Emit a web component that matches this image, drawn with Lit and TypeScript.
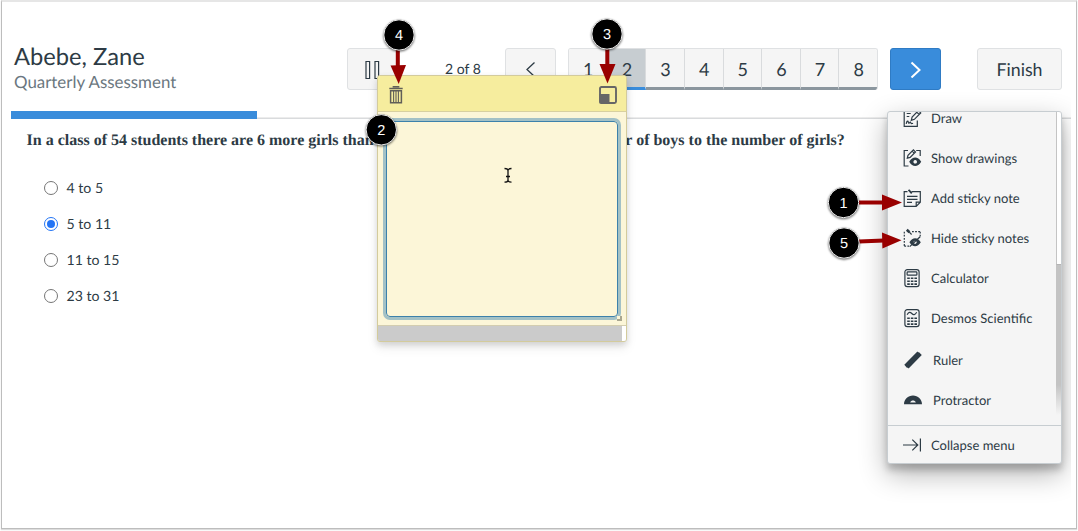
import { LitElement, html, css, svg, nothing } from "lit";
import { customElement, property, state } from "lit/decorators.js";
import { classMap } from "lit/directives/class-map.js";

interface Tool {
  icon: string;
  label: string;
  shape?: boolean;
}

interface Callout {
  label: string;
  x: number;
  y: number;
  line?: string;
  head?: string;
}

const TOOLS: Tool[] = [
  { icon: "draw", label: "Draw" },
  { icon: "show-drawings", label: "Show drawings" },
  { icon: "note", label: "Add sticky note" },
  { icon: "hide-notes", label: "Hide sticky notes" },
  { icon: "calculator", label: "Calculator" },
  { icon: "desmos", label: "Desmos Scientific" },
  { icon: "ruler", label: "Ruler", shape: true },
  { icon: "protractor", label: "Protractor", shape: true },
];

const CALLOUTS: Callout[] = [
  { label: "1", x: 843.5, y: 202.5, line: "M858 202.5H884", head: "M882 194.5V210.5L902 202.5Z" },
  { label: "2", x: 381.3, y: 129.8 },
  { label: "3", x: 607, y: 34, line: "M607.3 48V66", head: "M599.5 64H615.5L607.5 83.5Z" },
  { label: "4", x: 399, y: 35, line: "M397.8 49V67", head: "M390.5 65.5L406 65L398.7 84Z" },
  { label: "5", x: 844, y: 243, line: "M859 241.4L884 240.6", head: "M882 232.5L882.4 248.5L901.5 240.2Z" },
];

const ANSWERS = ["4 to 5", "5 to 11", "11 to 15", "23 to 31"];

const keypad = svg`
  <path
    d="M4.2 9.3h2.6M7.8 9.3h2.6M11.4 9.3h2.6M4.2 12.2h2.6M7.8 12.2h2.6M11.4 12.2h2.6M4.2 15.1h2.6M7.8 15.1h2.6M11.4 15.1h2.6"
    stroke-width="1.6"
  ></path>
`;

const ICONS: Record<string, unknown> = {
  draw: svg`
    <path d="M8 1.5H1.2V17.3H14.3V11.5M3.7 4.5h4M3.7 7.5h2.6"></path>
    <path d="M3.2 14.8c.6-2.6 1.5-3.5 2-2.2s.3 2.2 1.2 1.2 1-.8 1.5.2 1 .4 2.2.4"></path>
    <path d="M8.3 11.3l.8-3.3L15.4 1.6l2.3 2.3-6.3 6.4zM13.8 3.2l2.3 2.3"></path>
  `,
  "show-drawings": svg`
    <path d="M5 1.5H1.2V17H5.5M13.2 1.5h4V7"></path>
    <path d="M4.3 9.2l.7-2.9L10.4.9l2.1 2.1-5.4 5.4zM9.2 2.2l2.1 2.1"></path>
    <path
      class="solid"
      fill-rule="evenodd"
      d="M6.2 12.8C8 9.7 10 8.5 12.2 8.5s4.2 1.2 6 4.3c-1.8 3-3.8 4.2-6 4.2s-4.2-1.2-6-4.2zM12.2 11a1.8 1.8 0 1 0 .01 0z"
    ></path>
  `,
  note: svg`
    <path d="M4.5 2.7H1.2V17.3H13.2L17.3 13.2V2.7H8.5M13.2 17.3V13.2H17.3"></path>
    <path d="M4 7.3h10.5M4 10.3h10.5M4 13.3h5"></path>
    <path d="M5.5.8l1.6 1.6M7 2.4l1.8 2" stroke-width="1.9"></path>
  `,
  "hide-notes": svg`
    <path d="M1.3 2.7v15M1.3 17.2H6M9 2.7h9M17.2 2.7v5" stroke-dasharray="1.8 1.3"></path>
    <path d="M3.8.8l2.7 2.5" stroke-width="2.6"></path>
    <path d="M6.3 3.1l2.3 2.4"></path>
    <path
      class="solid"
      fill-rule="evenodd"
      d="M6.4 13.300c1.700-2.900 3.600-4 5.700-4s4 1.100 5.700 4c-1.700 2.900-3.600 4-5.700 4s-4-1.100-5.700-4zM12.100 11.700a1.600 1.600 0 1 0 .01 0z"
    ></path>
    <path d="M6.7 17.6L17.1 7.8" stroke-width="1.3"></path>
  `,
  calculator: svg`
    <rect x="1.9" y=".7" width="14.2" height="16.9" rx="2.4"></rect>
    <rect x="4.1" y="2.9" width="9.8" height="3.3" rx=".8"></rect>
    ${keypad}
  `,
  desmos: svg`
    <rect x="1.9" y=".7" width="14.2" height="16.9" rx="2.4"></rect>
    <path d="M4.1 5.7C5.8 2.7 7.2 2.9 8.8 4.5s3.2 1.6 4.9-1.3"></path>
    ${keypad}
  `,
  ruler: svg`<path class="solid" d="M.3 13.7L13.4.5l.9.9.5-.4 3 3L4.6 17.5l-1-1-.5.4z"></path>`,
  protractor: svg`
    <path
      class="solid"
      fill-rule="evenodd"
      d="M0 13.2C.2 8 4 4.5 9 4.5s8.8 3.5 9 8.7zM6.2 11.6h5.6C11.3 10 10.2 9.5 9 9.5s-2.3.5-2.8 2.1z"
    ></path>
  `,
  collapse: svg`<path d="M0 9h15M9.3 3.6L14.8 9l-5.5 5.4M17.4 2.5v13"></path>`,
};

@customElement("tool-icon")
export class ToolIcon extends LitElement {
  @property() name = "";

  static styles = css`
    :host {
      display: block;
      width: 18px;
      height: 18px;
      flex: none;
    }

    svg {
      display: block;
      overflow: visible;
      fill: none;
      stroke: #2d3b45;
      stroke-width: 1.2;
    }

    .solid {
      fill: #2d3b45;
      stroke: none;
    }
  `;

  protected render() {
    return html`<svg width="18" height="18" viewBox="0 0 18 18">${ICONS[this.name] ?? nothing}</svg>`;
  }
}

@customElement("tool-menu")
export class ToolMenu extends LitElement {
  static styles = css`
    :host {
      display: flex;
      flex-direction: column;
      box-sizing: border-box;
      background: #f5f5f5;
      border: 1px solid #c7cdd1;
      border-radius: 3px;
      overflow: hidden;
      color: #2d3b45;
      font-size: 13px;
    }

    .scroller {
      flex: 1;
      min-height: 0;
      display: flex;
      overflow: hidden;
    }

    .list {
      flex: 1;
      margin-top: -14px;
    }

    .row {
      display: flex;
      align-items: center;
      box-sizing: border-box;
      gap: 10px;
      height: 40px;
      padding: 0 0 1px 15px;
      white-space: nowrap;
    }

    .row.shape {
      padding: 4px 0 0 16px;
      gap: 11px;
    }

    .track {
      width: 5px;
      height: 303px;
      background: linear-gradient(#c3c3c3 90%, #f5f5f5);
    }

    .thumb {
      height: 153px;
      box-sizing: border-box;
      background: #fff;
      border-left: 1px solid #c4c4c4;
      border-bottom: 1px solid #b5b5b5;
    }

    .footer {
      height: 38px;
      padding-bottom: 0;
      border-top: 1px solid #c7cdd1;
    }
  `;

  protected render() {
    return html`
      <div class="scroller">
        <div class="list">
          ${TOOLS.map(
            (tool) => html`
              <div class=${classMap({ row: true, shape: !!tool.shape })}>
                <tool-icon name=${tool.icon}></tool-icon>
                <span>${tool.label}</span>
              </div>
            `
          )}
        </div>
        <div class="track"><div class="thumb"></div></div>
      </div>
      <div class="row footer">
        <tool-icon name="collapse"></tool-icon>
        <span>Collapse menu</span>
      </div>
    `;
  }
}

@customElement("sticky-note")
export class StickyNote extends LitElement {
  static styles = css`
    :host {
      display: flex;
      flex-direction: column;
      box-sizing: border-box;
      background: #fcf6d8;
      border: 1px solid #d3cb9c;
      border-radius: 3px;
      overflow: hidden;
    }

    .bar {
      display: flex;
      justify-content: space-between;
      align-items: center;
      box-sizing: border-box;
      height: 36px;
      padding: 2px 9px 0 11px;
      background: #f6ed9e;
      border-bottom: 1px solid #d8d0a0;
    }

    .bar svg {
      display: block;
    }

    .body {
      flex: 1;
      display: flex;
      padding: 9px 8px 8px 8px;
    }

    .text {
      flex: 1;
      display: flex;
      justify-content: flex-end;
      align-items: flex-end;
      border: 1px solid #3c81ab;
      border-radius: 4px;
      box-shadow: 0 0 0 3px #a3c1c6;
    }

    .grip {
      width: 3px;
      height: 3px;
      margin: 0 -5px -5px 0;
      border: 1px solid #a9a68f;
      border-width: 0 2px 2px 0;
      background: #fcf6d8;
    }

    .foot {
      display: flex;
      justify-content: flex-end;
      height: 15px;
      background: #cbcbcb;
      border-top: 1px solid #d3cdb0;
    }

    .corner {
      width: 4px;
      background: #fff;
    }
  `;

  protected render() {
    return html`
      <div class="bar">
        <svg width="14" height="18" viewBox="0 0 14 18" fill="none" stroke="#615f58">
          <path d="M4.5 1.5V.7h5v.8M.3 2.5h13.4" stroke-width="1.7"></path>
          <path d="M1.6 4.7h10.8v12H1.6z" stroke-width="1.5"></path>
          <path d="M4.6 5v11.5M7 5v11.5M9.4 5v11.5" stroke-width="1.1"></path>
        </svg>
        <svg width="18" height="18" viewBox="0 0 18 18">
          <rect x="1" y="1" width="16" height="16" rx="1.5" fill="none" stroke="#666" stroke-width="1.9"></rect>
          <path d="M.5 8H10.5V17.5H.5Z" fill="#666"></path>
        </svg>
      </div>
      <div class="body">
        <div class="text"><div class="grip"></div></div>
      </div>
      <div class="foot"><div class="corner"></div></div>
    `;
  }
}

@customElement("app-root")
export class AppRoot extends LitElement {
  @state() private _current = 2;
  @state() private _answer = 1;

  static styles = css`
    :host {
      display: block;
      position: relative;
      width: 1078px;
      height: 531px;
      overflow: hidden;
      background: #fff;
      color: #2d3b45;
      font-family: Lato, "Liberation Sans", sans-serif;
      text-rendering: geometricPrecision;
    }

    .frame {
      box-sizing: border-box;
      height: 529px;
      margin: 0 1px;
      padding: 0 5px 0 9px;
      border: 1px solid #bdbdbd;
      border-top: 2px solid #e6e6e6;
      box-shadow: 0 1px 1px #ddd;
    }

    .header {
      display: flex;
      box-sizing: border-box;
      height: 109px;
      padding: 40px 9px 0 3px;
    }

    .who {
      width: 333px;
    }

    .name {
      font-size: 23.7px;
      line-height: 30px;
    }

    .quiz {
      color: #6b7780;
      font-size: 16.9px;
      line-height: 20px;
    }

    .controls {
      display: flex;
      align-items: flex-start;
      padding-top: 6px;
    }

    .btn {
      display: flex;
      align-items: center;
      justify-content: center;
      box-sizing: border-box;
      height: 42px;
      width: 51px;
      background: #f5f5f5;
      border: 1px solid #dfe1e3;
      border-radius: 3px;
      font-size: 17.8px;
    }

    .btn.next {
      margin-left: 12px;
      background: #398cdb;
      border-color: #2f7bc4;
    }

    .btn.finish {
      width: 85px;
      margin-left: 36px;
    }

    .count {
      width: 107px;
      line-height: 42px;
      padding-left: 23px;
      box-sizing: border-box;
      text-align: center;
      font-size: 14px;
    }

    .pages {
      display: flex;
      box-sizing: border-box;
      width: 310px;
      height: 42px;
      margin-left: 12px;
      border: 1px solid #dfe1e3;
      border-bottom: 0;
      border-radius: 3px;
      overflow: hidden;
    }

    .page {
      flex: 1;
      display: flex;
      align-items: center;
      justify-content: center;
      padding: 1px 0 0 1px;
      background: #f5f5f5;
      border-right: 1px solid #d9dbdd;
      border-bottom: 3px solid #8b969e;
      font-size: 18px;
    }

    .page:last-child {
      border-right: 0;
    }

    .page.current {
      background: #c7cdd1;
      border-bottom-color: #398cdb;
    }

    .progress {
      height: 8px;
      box-sizing: border-box;
      border-bottom: 1px solid #d9dbdd;
      box-shadow: inset 0 -1px #ececec;
    }

    .done {
      width: 246px;
      height: 8px;
      background: #398cdb;
    }

    .question {
      margin: 12px 0 0 15.5px;
      font: bold 16px/20px "Liberation Serif", serif;
      white-space: nowrap;
    }

    .answers {
      display: flex;
      flex-direction: column;
      gap: 14px;
      padding: 26px 0 0 33px;
    }

    .answer {
      display: flex;
      align-items: center;
      gap: 8.5px;
      height: 22px;
      font-size: 14.1px;
      line-height: 19px;
    }

    .radio {
      display: flex;
      box-sizing: border-box;
      width: 14px;
      height: 14px;
      padding: 2px;
      border: 1px solid #767676;
      border-radius: 50%;
    }

    .radio.on {
      border-color: #2374f5;
    }

    .radio.on::after {
      content: "";
      flex: 1;
      border-radius: 50%;
      background: #2374f5;
    }

    .overlay {
      position: absolute;
      inset: 0 7px 2px 0;
      overflow: hidden;
    }

    tool-menu {
      position: absolute;
      left: 887px;
      top: 111px;
      width: 175px;
      height: 353px;
      box-shadow: 0 6px 7px rgba(0, 0, 0, 0.2), 0 10px 28px rgba(0, 0, 0, 0.3);
    }

    sticky-note {
      position: absolute;
      left: 377px;
      top: 75px;
      width: 250px;
      height: 267px;
      box-shadow: 0 3px 6px rgba(0, 0, 0, 0.13), 0 6px 12px rgba(0, 0, 0, 0.07);
    }

    .callouts {
      position: absolute;
      inset: 0;
      font-family: "Liberation Sans", sans-serif;
      font-size: 14.5px;
    }

    .dot {
      filter: drop-shadow(0 1.5px 1px rgba(0, 0, 0, 0.6));
    }
  `;

  private _renderCallout(c: Callout) {
    return svg`
      ${c.line ? svg`<path d=${c.line} stroke="#990000" stroke-width="4"></path>` : nothing}
      ${c.head ? svg`<path d=${c.head} fill="#990000"></path>` : nothing}
      <circle class="dot" cx=${c.x} cy=${c.y} r="15.2" fill="#000" stroke="#eee" stroke-width="1"></circle>
      <text x=${c.x} y=${c.y + 5} fill="#fff" text-anchor="middle">${c.label}</text>
    `;
  }

  protected render() {
    return html`
      <div class="frame">
        <div class="header">
          <div class="who">
            <div class="name">Abebe, Zane</div>
            <div class="quiz">Quarterly Assessment</div>
          </div>
          <div class="controls">
            <div class="btn">
              <svg width="15" height="20" viewBox="0 0 15 20" fill="none" stroke="#2d3b45" stroke-width="1.2">
                <path d="M1 2.5h3.6v17H1zM10 2.5h3.6v17H10z"></path>
              </svg>
            </div>
            <div class="count">${this._current} of 8</div>
            <div class="btn">
              <svg width="10" height="16" viewBox="0 0 10 16" fill="none" stroke="#2d3b45" stroke-width="1.3">
                <path d="M8.5 1.5L1 8.5L8.5 15.5"></path>
              </svg>
            </div>
            <div class="pages">
              ${[1, 2, 3, 4, 5, 6, 7, 8].map(
                (n) => html`<div class=${classMap({ page: true, current: n === this._current })}>${n}</div>`
              )}
            </div>
            <div class="btn next">
              <svg width="12" height="18" viewBox="0 0 12 18" fill="none" stroke="#fff" stroke-width="2">
                <path d="M1.5 2.5L9.5 10L1.5 17.5"></path>
              </svg>
            </div>
            <div class="btn finish">Finish</div>
          </div>
        </div>
        <div class="progress"><div class="done"></div></div>
        <div class="question">
          In a class of 54 students there are 6 more girls than boys. What is the ratio of the number of boys to the
          number of girls?
        </div>
        <div class="answers">
          ${ANSWERS.map(
            (answer, i) => html`
              <div class="answer">
                <span class=${classMap({ radio: true, on: i === this._answer })}></span>
                <span>${answer}</span>
              </div>
            `
          )}
        </div>
      </div>
      <div class="overlay">
        <sticky-note></sticky-note>
        <tool-menu></tool-menu>
      </div>
      <svg class="callouts" width="1078" height="531" viewBox="0 0 1078 531">
        <path
          d="M504.5 168.5q3 0 3.5 1.7q.5-1.7 3.5-1.7M508 170v10.5M504.5 182.2q3 0 3.5-1.7q.5 1.7 3.5 1.7M506 176.5h4"
          fill="none"
          stroke="#111"
          stroke-width="1.3"
        ></path>
        ${CALLOUTS.map((c) => this._renderCallout(c))}
      </svg>
    `;
  }
}
